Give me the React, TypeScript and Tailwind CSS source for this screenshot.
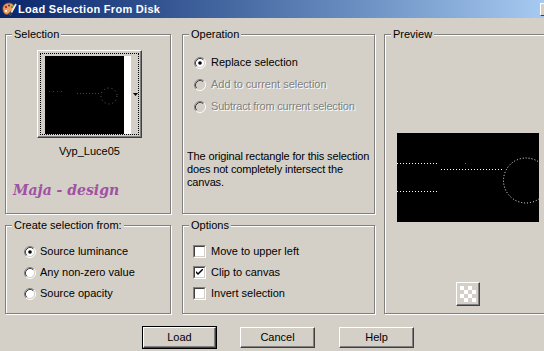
import React from "react";

const FONT = { fontFamily: '"Liberation Sans", Arial, sans-serif' };

function Radio({ checked, disabled }: { checked?: boolean; disabled?: boolean }) {
  return (
    <svg width="12" height="12" viewBox="0 0 12 12" className="shrink-0">
      <circle cx="6" cy="6" r="4.5" fill={disabled ? "#d4d0c8" : "#ffffff"} />
      <path d="M 2.11 9.89 A 5.5 5.5 0 0 1 9.89 2.11" fill="none" stroke="#808080" strokeWidth="1" />
      <path d="M 9.89 2.11 A 5.5 5.5 0 0 1 2.11 9.89" fill="none" stroke="#ffffff" strokeWidth="1" />
      <path d="M 2.82 9.18 A 4.5 4.5 0 0 1 9.18 2.82" fill="none" stroke="#404040" strokeWidth="1" />
      <path d="M 9.18 2.82 A 4.5 4.5 0 0 1 2.82 9.18" fill="none" stroke="#d4d0c8" strokeWidth="1" />
      {checked && <circle cx="6" cy="6" r="1.8" fill="#000000" />}
    </svg>
  );
}

function Check({ checked }: { checked?: boolean }) {
  return (
    <div className="w-[13px] h-[13px] shrink-0 border border-t-[#808080] border-l-[#808080] border-r-white border-b-white">
      <div className="w-full h-full bg-white border border-t-[#404040] border-l-[#404040] border-r-[#d4d0c8] border-b-[#d4d0c8] flex items-center justify-center">
        {checked && (
          <svg width="7" height="7" viewBox="0 0 7 7">
            <path d="M0 2 L0 4 L2 6 L7 1 L7 -1 L2 4 Z" fill="#000" />
          </svg>
        )}
      </div>
    </div>
  );
}

function Group({ title, className, children }: { title: string; className: string; children?: React.ReactNode }) {
  return (
    <fieldset className={"border border-[#808080] shadow-[inset_1px_1px_0_#fff,1px_1px_0_#fff] " + className}>
      <legend className="ml-[6px] px-[2px] bg-[#d4d0c8] leading-[13px] text-black">{title}</legend>
      {children}
    </fieldset>
  );
}

function Button({ label, isDefault }: { label: string; isDefault?: boolean }) {
  const inner = (
    <div className="w-full h-full border border-t-white border-l-white border-r-[#404040] border-b-[#404040] shadow-[inset_-1px_-1px_0_#808080] flex items-center justify-center text-black">
      {label}
    </div>
  );
  if (isDefault) {
    return <div className="w-[75px] h-[23px] border border-black">{inner}</div>;
  }
  return <div className="w-[75px] h-[21px] my-[1px]">{inner}</div>;
}

function Dots({ x1, x2, y }: { x1: number; x2: number; y: number }) {
  return <line x1={x1} y1={y + 0.5} x2={x2} y2={y + 0.5} stroke="#ffffff" strokeWidth="1" strokeDasharray="1 2" />;
}

export default function App() {
  return (
    <div className="w-[544px] h-[351px] bg-[#d4d0c8] overflow-hidden text-[11px] text-black" style={FONT}>
      {/* Title bar */}
      <div className="h-[18px] flex items-center bg-gradient-to-r from-[#0a246a] to-[#a6caf0]">
        <svg width="16" height="16" viewBox="0 0 16 16" className="ml-[1px] shrink-0">
          <path d="M2 9 C1 5 4 2 8 2 C12 2 14 5 13 8 C12 10 10 9 9 11 C8 13 6 14 4 13 C3 12 2 11 2 9 Z" fill="#e8a060" stroke="#8a4a20" strokeWidth="0.8" />
          <circle cx="5" cy="6" r="1.2" fill="#d02020" />
          <circle cx="8" cy="4.5" r="1.1" fill="#2040d0" />
          <circle cx="11" cy="6" r="1.1" fill="#30a030" />
          <circle cx="5" cy="10" r="1.1" fill="#ffffff" />
          <path d="M9 14 L15 3" stroke="#f0f0f0" strokeWidth="1.6" />
          <path d="M9 14 L10.5 11.5" stroke="#303030" strokeWidth="1.8" />
        </svg>
        <span className="ml-[1px] text-white font-bold text-[11px] tracking-[0.3px] leading-none">Load Selection From Disk</span>
        <div className="flex-1" />
        <div className="w-[16px] h-[13px] mr-[-12px] shrink-0 bg-[#d4d0c8] border border-t-white border-l-white border-r-[#404040] border-b-[#404040]" />
      </div>

      {/* Body */}
      <div className="flex pl-[5px] pt-[10px]">
        {/* Left column */}
        <div className="flex flex-col w-[166px] shrink-0">
          <Group title="Selection" className="h-[186px] flex flex-col">
            <div className="ml-[31px] mt-[9px] w-[105px] h-[88px] border border-t-white border-l-white border-r-[#404040] border-b-[#404040] shadow-[inset_-1px_-1px_0_#808080] p-[2px]">
              <div className="w-full h-full border border-dotted border-black flex items-center pl-[4px] pt-[1px]">
                <div className="flex items-stretch h-[78px]">
                  <svg width="79" height="78" viewBox="0 0 79 78" className="block">
                    <rect width="79" height="78" fill="#000" />
                    <line x1="4" y1="35.5" x2="20" y2="35.5" stroke="#333" strokeDasharray="1 3" />
                    <line x1="32" y1="37.5" x2="55" y2="37.5" stroke="#444" strokeDasharray="1 2" />
                    <circle cx="64" cy="40" r="8" fill="none" stroke="#666" strokeDasharray="1 3" />
                  </svg>
                  <div className="w-[7px] bg-white" />
                </div>
                <svg width="5" height="3" viewBox="0 0 5 3" className="ml-[2px]">
                  <path d="M0 0 L5 0 L2.5 3 Z" fill="#000" />
                </svg>
              </div>
            </div>
            <div className="ml-[31px] w-[105px] mt-[7px] text-center leading-[13px]">Vyp_Luce05</div>
            <div
              className="ml-[7px] mt-[23px] text-[14px] leading-[18px] italic font-bold text-[#a150a3]"
              style={{ fontFamily: '"DejaVu Serif", "Liberation Serif", serif' }}
            >
              Maja - design
            </div>
          </Group>
          <Group title="Create selection from:" className="mt-[5px] h-[95px] flex flex-col">
            <div className="flex flex-col gap-[8px] mt-[13px] pl-[18px]">
              <div className="flex items-center gap-[4px] h-[13px]">
                <Radio checked />
                <span>Source luminance</span>
              </div>
              <div className="flex items-center gap-[4px] h-[13px]">
                <Radio />
                <span>Any non-zero value</span>
              </div>
              <div className="flex items-center gap-[4px] h-[13px]">
                <Radio />
                <span>Source opacity</span>
              </div>
            </div>
          </Group>
        </div>

        {/* Middle column */}
        <div className="flex flex-col w-[193px] ml-[11px] shrink-0">
          <Group title="Operation" className="h-[186px] flex flex-col">
            <div className="flex flex-col gap-[9px] mt-[15px] pl-[11px]">
              <div className="flex items-center gap-[5px] h-[13px]">
                <Radio checked />
                <span>Replace selection</span>
              </div>
              <div className="flex items-center gap-[5px] h-[13px]">
                <Radio disabled />
                <span className="text-[#808080] [text-shadow:1px_1px_0_#fff]">Add to current selection</span>
              </div>
              <div className="flex items-center gap-[5px] h-[13px]">
                <Radio disabled />
                <span className="text-[#808080] [text-shadow:1px_1px_0_#fff] tracking-[-0.2px]">Subtract from current selection</span>
              </div>
            </div>
            <p className="mt-[37px] pl-[4px] leading-[13px] whitespace-nowrap tracking-[-0.15px]">
              The original rectangle for this selection
              <br />
              does not completely intersect the
              <br />
              canvas.
            </p>
          </Group>
          <Group title="Options" className="mt-[5px] h-[95px] flex flex-col">
            <div className="flex flex-col gap-[8px] mt-[13px] pl-[10px]">
              <div className="flex items-center gap-[5px] h-[13px]">
                <Check />
                <span>Move to upper left</span>
              </div>
              <div className="flex items-center gap-[5px] h-[13px]">
                <Check checked />
                <span>Clip to canvas</span>
              </div>
              <div className="flex items-center gap-[5px] h-[13px]">
                <Check />
                <span>Invert selection</span>
              </div>
            </div>
          </Group>
        </div>

        {/* Right column */}
        <div className="flex flex-col w-[175px] ml-[9px] shrink-0">
          <Group title="Preview" className="h-[286px] flex flex-col">
            <svg width="142" height="89" viewBox="0 0 142 89" className="ml-[12px] mt-[92px] block">
              <rect width="142" height="89" fill="#000" />
              <Dots x1={0} x2={41} y={30} />
              <Dots x1={0} x2={41} y={58} />
              <Dots x1={44} x2={105} y={36} />
              <rect x="68" y="30" width="1" height="1" fill="#666" />
              <circle cx="129" cy="47.5" r="22.5" fill="none" stroke="#fff" strokeWidth="1" strokeDasharray="1 2" />
            </svg>
            <div className="ml-[71px] mt-[60px] w-[24px] h-[24px] border border-t-white border-l-white border-r-[#404040] border-b-[#404040] shadow-[inset_-1px_-1px_0_#808080] flex items-center justify-center">
              <svg width="16" height="16" viewBox="0 0 16 16">
                <rect width="16" height="16" fill="#ffffff" />
                <rect x="4" y="0" width="4" height="4" fill="#d4d0c8" />
                <rect x="12" y="0" width="4" height="4" fill="#d4d0c8" />
                <rect x="0" y="4" width="4" height="4" fill="#d4d0c8" />
                <rect x="8" y="4" width="4" height="4" fill="#d4d0c8" />
                <rect x="4" y="8" width="4" height="4" fill="#d4d0c8" />
                <rect x="12" y="8" width="4" height="4" fill="#d4d0c8" />
                <rect x="0" y="12" width="4" height="4" fill="#d4d0c8" />
                <rect x="8" y="12" width="4" height="4" fill="#d4d0c8" />
              </svg>
            </div>
          </Group>
        </div>
      </div>

      {/* Buttons */}
      <div className="flex mt-[12px] pl-[142px]">
        <Button label="Load" isDefault />
        <div className="ml-[23px]">
          <Button label="Cancel" />
        </div>
        <div className="ml-[24px]">
          <Button label="Help" />
        </div>
      </div>
    </div>
  );
}
